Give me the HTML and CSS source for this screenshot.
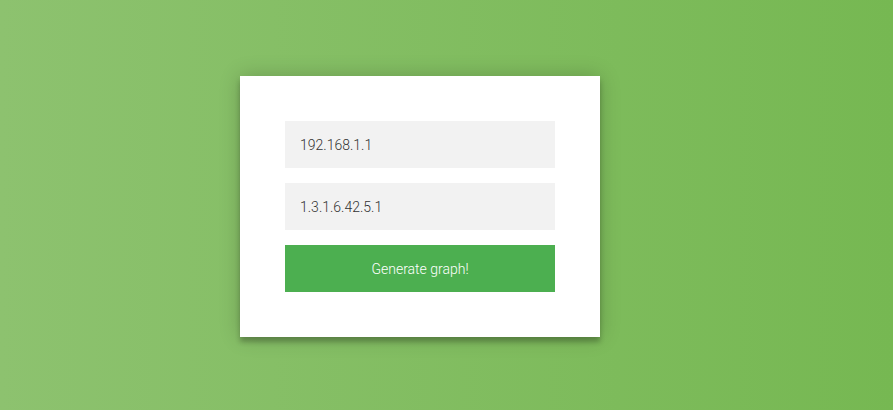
FILE: index.html
```html
<!DOCTYPE html>
<html>
<head>
<meta charset="utf-8">
<link rel="stylesheet" href="styles.css">
</head>
<body>
<div class="page">
  <form class="form">
    <input class="field" type="text" value="192.168.1.1">
    <input class="field" type="text" value="1.3.1.6.42.5.1">
    <button class="btn" type="button">Generate graph!</button>
  </form>
</div>
</body>
</html>
```
FILE: styles.css
```css
html, body {
  margin: 0;
  height: 100%;
}
body {
  background: linear-gradient(to left, #76b852, #8dc26f);
  font-family: Roboto, "Liberation Sans", sans-serif;
  overflow: hidden;
}
.page {
  padding: 76px 0 0 240px;
}
.form {
  width: 270px;
  padding: 45px;
  background: #fff;
  box-shadow: 0 0 20px 0 rgba(0,0,0,0.2), 0 5px 5px 0 rgba(0,0,0,0.24);
  display: flex;
  flex-direction: column;
  gap: 15px;
  margin: 0;
}
.field {
  font-family: Roboto, "Liberation Sans", sans-serif;
  font-weight: 300;
  font-size: 14px;
  background: #f2f2f2;
  border: 0;
  outline: 0;
  margin: 0;
  padding: 15px;
  height: 47px;
  box-sizing: border-box;
  width: 100%;
  color: #333;
}
.btn {
  font-family: Roboto, "Liberation Sans", sans-serif;
  font-weight: 300;
  font-size: 14px;
  background: #4caf50;
  color: #fff;
  border: 0;
  outline: 0;
  margin: 0;
  padding: 15px;
  height: 47px;
  width: 100%;
  cursor: pointer;
}
```
